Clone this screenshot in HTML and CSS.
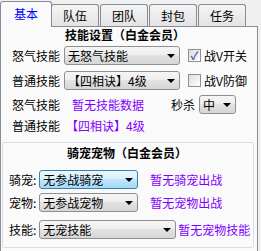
FILE: index.html
```html
<!DOCTYPE html>
<html lang="zh-CN">
<head>
    <meta charset="UTF-8">
    <link rel="stylesheet" href="styles.css">
    <title>基本</title>
</head>
<body>
    <div class="tabs">
        <div class="tab active">基本</div>
        <div class="tab">队伍</div>
        <div class="tab">团队</div>
        <div class="tab">封包</div>
        <div class="tab">任务</div>
    </div>

    <div class="page">
        <div class="title">技能设置（白金会员）</div>

        <div class="row r1">
            <span class="lbl">怒气技能</span>
            <div class="combo wide">无怒气技能<i class="arrow"></i></div>
            <label class="chk"><span class="box on">✓</span>战V开关</label>
        </div>
        <div class="row r2">
            <span class="lbl">普通技能</span>
            <div class="combo wide">【四相诀】4级<i class="arrow"></i></div>
            <label class="chk"><span class="box"></span>战V防御</label>
        </div>
        <div class="row r3">
            <span class="lbl">怒气技能</span>
            <span class="info">暂无技能数据</span>
            <span class="lbl kill">秒杀</span>
            <div class="combo small">中<i class="arrow"></i></div>
        </div>
        <div class="row r4">
            <span class="lbl">普通技能</span>
            <span class="info bracket">【四相诀】4级</span>
        </div>

        <div class="group">
            <div class="title">骑宠宠物（白金会员）</div>
            <div class="row p1">
                <span class="lbl">骑宠:</span>
                <div class="combo pet hover">无参战骑宠<i class="arrow"></i></div>
                <span class="info">暂无骑宠出战</span>
            </div>
            <div class="row p2">
                <span class="lbl">宠物:</span>
                <div class="combo pet">无参战宠物<i class="arrow"></i></div>
                <span class="info">暂无宠物出战</span>
            </div>
            <div class="row p3">
                <span class="lbl">技能:</span>
                <div class="combo petskill">无宠技能<i class="arrow"></i></div>
                <span class="info tight">暂无宠物技能</span>
            </div>
        </div>
    </div>
</body>
</html>
```

FILE: styles.css
```css
body {
    margin: 0;
    width: 261px;
    height: 251px;
    overflow: hidden;
    background-color: #f0f0f0;
    font-family: "Noto Sans CJK SC", "DejaVu Sans", sans-serif;
    font-size: 12px;
    color: #000;
}

/* tab strip */
.tabs {
    display: flex;
    height: 26px;
    padding-left: 2px;
    align-items: flex-end;
}

.tab {
    width: 48px;
    height: 22px;
    line-height: 21px;
    text-align: center;
    box-sizing: border-box;
    border: 1px solid #898c95;
    border-bottom: none;
    border-radius: 3px 3px 0 0;
    margin-right: 1px;
    background: linear-gradient(#f5f5f5, #e3e3e3);
}

.tab.active {
    width: 52px;
    height: 26px;
    line-height: 24px;
    margin-left: -2px;
    margin-right: -1px;
    color: #0000ff;
    background: #fafafa;
    position: relative;
    z-index: 1;
    margin-bottom: -1px;
}

/* tab page */
.page {
    width: 258px;
    height: 230px;
    box-sizing: border-box;
    border: 1px solid #898c95;
    background: #fafafa;
    padding: 1px 3px 0 1px;
}

.title {
    text-align: center;
    font-weight: bold;
    height: 17px;
    line-height: 14px;
    padding-right: 6px;
}

.row {
    display: flex;
    align-items: center;
    white-space: nowrap;
}

.r1 { height: 19px; margin-top: 1px; padding-left: 10px; }
.r2 { height: 19px; margin-top: 6px; padding-left: 10px; }
.r3 { height: 19px; margin-top: 5px; padding-left: 10px; }
.r4 { height: 16px; margin-top: 4px; padding-left: 10px; }

.lbl {
    line-height: 14px;
}

.combo {
    position: relative;
    height: 19px;
    line-height: 17px;
    box-sizing: border-box;
    border: 1px solid #8e8f8f;
    border-radius: 3px;
    padding-left: 3px;
    background: linear-gradient(#f6f6f6 0%, #eeeeee 45%, #e2e2e2 50%, #d6d6d6 100%);
    overflow: hidden;
}

.combo.wide {
    width: 116px;
    margin-left: 4px;
}

.combo.small {
    width: 37px;
    margin-left: 4px;
}

.combo.pet {
    width: 99px;
    margin-left: 3px;
}

.combo.petskill {
    width: 137px;
    margin-left: 3px;
}

.combo.hover {
    border-color: #3c7fb1;
    background: linear-gradient(#eaf6fd 0%, #d9f0fc 45%, #bee6fd 50%, #a7d9f5 100%);
}

.arrow {
    position: absolute;
    right: 4px;
    top: 7px;
    width: 0;
    height: 0;
    border-left: 4px solid transparent;
    border-right: 4px solid transparent;
    border-top: 4px solid #000;
}

.chk {
    display: flex;
    align-items: center;
    margin-left: 8px;
}

.box {
    width: 13px;
    height: 13px;
    box-sizing: border-box;
    border: 1px solid #8e8f8f;
    background: linear-gradient(135deg, #dcdcdc, #ffffff);
    margin-right: 3px;
    font-size: 11px;
    line-height: 11px;
    text-align: center;
    color: #4a5f97;
    font-weight: bold;
}

.info {
    color: #8000ff;
    margin-left: 12px;
    line-height: 14px;
}

.info.bracket {
    margin-left: 6px;
}

.kill {
    margin-left: 27px;
}

/* pet group box */
.group {
    margin-top: 8px;
    height: 106px;
    box-sizing: border-box;
    border: 1px solid #d5dfe5;
    border-radius: 2px;
    padding-top: 3px;
}

.group .title {
    height: 15px;
    padding-right: 2px;
}

.p1 { height: 19px; margin-top: 9px; padding-left: 6px; }
.p2 { height: 19px; margin-top: 4px; padding-left: 6px; }
.p3 { height: 19px; margin-top: 8px; padding-left: 6px; }

.info.tight {
    margin-left: 2px;
}
```
